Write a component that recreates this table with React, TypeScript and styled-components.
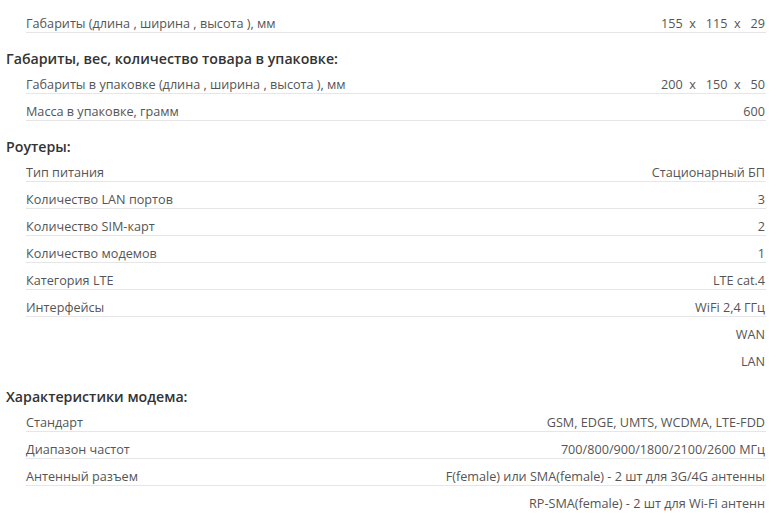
import React from "react";
import styled, { createGlobalStyle } from "styled-components";

const Global = createGlobalStyle`
  html, body { margin: 0; padding: 0; background: #ffffff; }
  body { font-family: "Open Sans", "Liberation Sans", sans-serif; }
`;

const Page = styled.div`
  width: 783px;
  padding: 6px 17px 0 6px;
  box-sizing: border-box;
`;

const Section = styled.section`
  display: flex;
  flex-direction: column;
`;

const Title = styled.h3`
  margin: 17px 0 0 0;
  font-size: 14.2px;
  line-height: 17px;
  font-weight: 600;
  color: #333333;
`;

const Rows = styled.div`
  display: flex;
  flex-direction: column;
  margin-left: 20px;
`;

const Row = styled.div<{ $ruled: boolean }>`
  display: flex;
  justify-content: space-between;
  align-items: flex-end;
  padding-top: 9px;
  border-bottom: 1px solid ${(p) => (p.$ruled ? "#e6e6e6" : "transparent")};
  font-size: 12.65px;
  line-height: 17px;
  color: #555555;
`;

const Label = styled.span`
  white-space: nowrap;
`;

const Value = styled.span`
  white-space: pre;
  text-align: right;
  padding-right: 1px;
`;

type Item = { label: string; values: string[] };
type Group = { title?: string; items: Item[] };

const groups: Group[] = [
  {
    items: [
      { label: "Габариты (длина , ширина , высота ), мм", values: ["155  x   115  x   29"] },
    ],
  },
  {
    title: "Габариты, вес, количество товара в упаковке:",
    items: [
      { label: "Габариты в упаковке (длина , ширина , высота ), мм", values: ["200  x   150  x   50"] },
      { label: "Масса в упаковке, грамм", values: ["600"] },
    ],
  },
  {
    title: "Роутеры:",
    items: [
      { label: "Тип питания", values: ["Стационарный БП"] },
      { label: "Количество LAN портов", values: ["3"] },
      { label: "Количество SIM-карт", values: ["2"] },
      { label: "Количество модемов", values: ["1"] },
      { label: "Категория LTE", values: ["LTE cat.4"] },
      { label: "Интерфейсы", values: ["WiFi 2,4 ГГц", "WAN", "LAN"] },
    ],
  },
  {
    title: "Характеристики модема:",
    items: [
      { label: "Стандарт", values: ["GSM, EDGE, UMTS, WCDMA, LTE-FDD"] },
      { label: "Диапазон частот", values: ["700/800/900/1800/2100/2600 МГц"] },
      {
        label: "Антенный разъем",
        values: [
          "F(female) или SMA(female) - 2 шт для 3G/4G антенны",
          "RP-SMA(female) - 2 шт для Wi-Fi антенн",
        ],
      },
    ],
  },
];

export default function App() {
  return (
    <>
      <Global />
      <Page>
        {groups.map((g, gi) => (
          <Section key={gi}>
            {g.title && <Title>{g.title}</Title>}
            <Rows>
              {g.items.map((it) =>
                it.values.map((v, vi) => (
                  <Row key={it.label + vi} $ruled={vi === 0}>
                    <Label>{vi === 0 ? it.label : ""}</Label>
                    <Value>{v}</Value>
                  </Row>
                ))
              )}
            </Rows>
          </Section>
        ))}
      </Page>
    </>
  );
}
